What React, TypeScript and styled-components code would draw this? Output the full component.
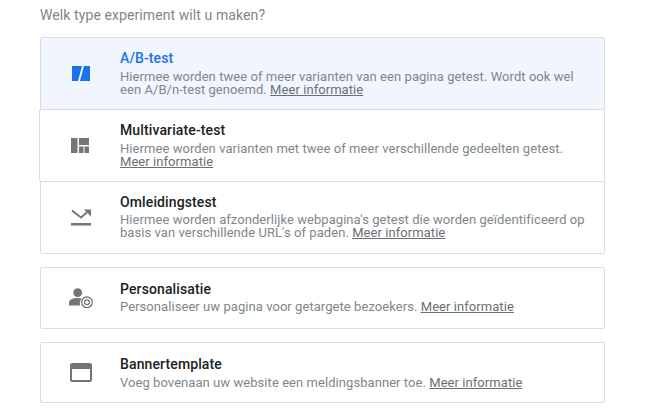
import React from 'react';
import styled, { createGlobalStyle } from 'styled-components';

const GlobalStyle = createGlobalStyle`
  html, body {
    margin: 0;
    padding: 0;
    background: #fff;
    font-family: Roboto, "Liberation Sans", sans-serif;
  }
`;

const Page = styled.div`
  width: 565px;
  padding: 6px 0 0 40px;
`;

const Question = styled.div`
  font-size: 14px;
  line-height: 18px;
  letter-spacing: 0.09px;
  color: #80868b;
  margin-bottom: 13px;
`;

const Group = styled.div`
  display: flex;
  flex-direction: column;
  margin-bottom: 13px;
`;

const Card = styled.div<{ $selected?: boolean; $height: number; $outdent?: boolean }>`
  box-sizing: border-box;
  height: ${({ $height }) => $height}px;
  display: flex;
  align-items: center;
  border: 1px solid #dadce0;
  border-radius: 2px;
  margin-top: -1px;
  margin-left: ${({ $outdent }) => ($outdent ? '-1px' : '0')};
  background: ${({ $selected }) => ($selected ? '#f0f5fe' : '#fff')};
  &:first-child {
    margin-top: 0;
  }
`;

const IconSlot = styled.div<{ $outdent?: boolean }>`
  width: ${({ $outdent }) => ($outdent ? 80 : 79)}px;
  flex: none;
  display: flex;
  justify-content: center;
  align-items: center;
  color: #757575;
`;

const Body = styled.div`
  flex: 1;
  min-width: 0;
  padding: 0 12px 2px 0;
`;

const Title = styled.div<{ $selected?: boolean }>`
  font-size: 14px;
  line-height: 18px;
  font-weight: 500;
  letter-spacing: 0.12px;
  color: ${({ $selected }) => ($selected ? '#1a73e8' : '#202124')};
`;

const Description = styled.div<{ $tight?: boolean }>`
  font-size: 13px;
  line-height: 13px;
  letter-spacing: 0.06px;
  margin: ${({ $tight }) => ($tight ? '2px 0 1px' : '3px 0 0')};
  color: #80868b;
`;

const MoreLink = styled.a`
  color: #6b7075;
  text-decoration: underline;
`;

const AbIcon = () => (
  <svg width="18" height="15" viewBox="0 0 18 15">
    <path fill="#1a73e8" d="M0 0h10L6 15H0zM12 0h6v15H8z" />
  </svg>
);

const MultivariateIcon = () => (
  <svg width="18" height="15" viewBox="0 0 18 15">
    <path fill="currentColor" d="M0 0h6.500v15H0zM8 0h10v7H8zM8 8.500h4.500V15H8zM13.500 8.500H18V15h-4.500z" />
  </svg>
);

const RedirectIcon = () => (
  <svg width="20" height="17" viewBox="0 0 20 17">
    <path fill="none" stroke="currentColor" strokeWidth="2" d="M1 1.500 10 8.500 17 2.500" />
    <path fill="currentColor" d="M13 0.500h7v7zM0 14h20v2.500H0z" />
  </svg>
);

const PersonTargetIcon = () => (
  <svg width="24" height="20" viewBox="0 0 24 20">
    <circle cx="8.700" cy="4.700" r="4.400" fill="currentColor" />
    <path fill="currentColor" d="M0 17.500v-3.500c0-2.300 4-4 8.700-4 1.600 0 3 .2 4.300.6A7.500 7.500 0 0 0 11 17.500z" />
    <circle cx="18" cy="14.300" r="5.300" fill="none" stroke="currentColor" strokeWidth="1.300" />
    <circle cx="18" cy="14.300" r="2.400" fill="none" stroke="currentColor" strokeWidth="1.300" />
  </svg>
);

const BannerIcon = () => (
  <svg width="22" height="19" viewBox="0 0 22 19">
    <path fill="currentColor" d="M2 0h18a2 2 0 0 1 2 2v15a2 2 0 0 1-2 2H2a2 2 0 0 1-2-2V2a2 2 0 0 1 2-2zm0 6v11h18V6z" />
  </svg>
);

export default function App() {
  return (
    <Page>
      <GlobalStyle />
      <Question>Welk type experiment wilt u maken?</Question>
      <Group>
        <Card $selected $height={73}>
          <IconSlot><AbIcon /></IconSlot>
          <Body>
            <Title $selected>A/B-test</Title>
            <Description>
              Hiermee worden twee of meer varianten van een pagina getest. Wordt ook wel een A/B/n-test genoemd. <MoreLink>Meer informatie</MoreLink>
            </Description>
          </Body>
        </Card>
        <Card $height={73} $outdent>
          <IconSlot $outdent><MultivariateIcon /></IconSlot>
          <Body>
            <Title>Multivariate-test</Title>
            <Description>
              Hiermee worden varianten met twee of meer verschillende gedeelten getest. <MoreLink>Meer informatie</MoreLink>
            </Description>
          </Body>
        </Card>
        <Card $height={73}>
          <IconSlot><RedirectIcon /></IconSlot>
          <Body>
            <Title>Omleidingstest</Title>
            <Description $tight>
              Hiermee worden afzonderlijke webpagina's getest die worden geïdentificeerd op basis van verschillende URL's of paden. <MoreLink>Meer informatie</MoreLink>
            </Description>
          </Body>
        </Card>
      </Group>
      <Group>
        <Card $height={62}>
          <IconSlot><PersonTargetIcon /></IconSlot>
          <Body>
            <Title>Personalisatie</Title>
            <Description $tight>
              Personaliseer uw pagina voor getargete bezoekers. <MoreLink>Meer informatie</MoreLink>
            </Description>
          </Body>
        </Card>
      </Group>
      <Group>
        <Card $height={61}>
          <IconSlot><BannerIcon /></IconSlot>
          <Body>
            <Title>Bannertemplate</Title>
            <Description>
              Voeg bovenaan uw website een meldingsbanner toe. <MoreLink>Meer informatie</MoreLink>
            </Description>
          </Body>
        </Card>
      </Group>
    </Page>
  );
}
